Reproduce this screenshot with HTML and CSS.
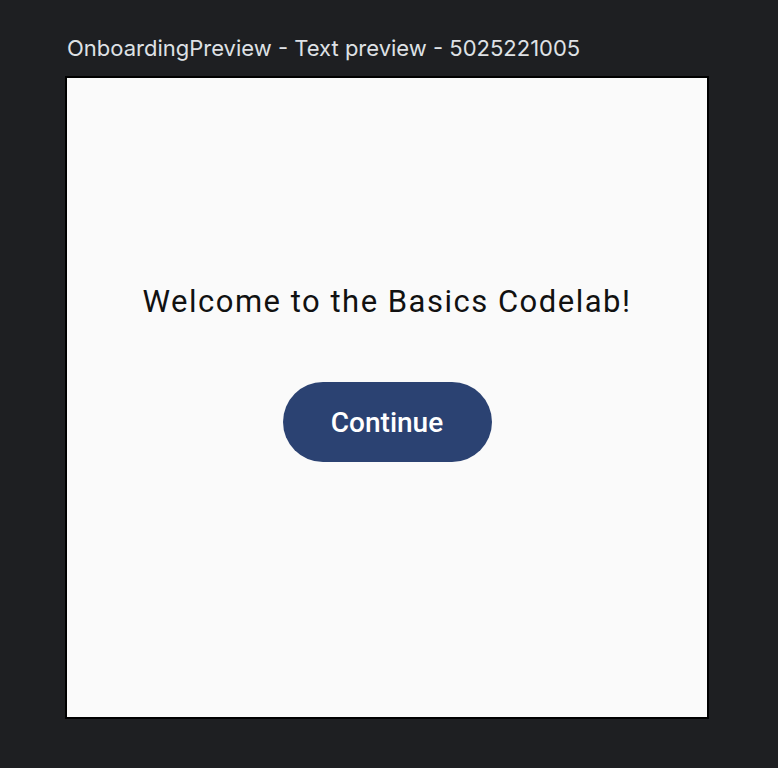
FILE: index.html
```html
<!DOCTYPE html>
<html lang="en">
<head>
  <meta charset="UTF-8" />
  <title>OnboardingPreview</title>
  <link rel="stylesheet" href="styles.css">
</head>
<body>
  <div class="preview">
    <div class="preview-title">OnboardingPreview - Text preview - 5025221005</div>
    <div class="frame">
      <div class="onboarding">
        <p class="welcome">Welcome to the Basics Codelab!</p>
        <button class="continue">Continue</button>
      </div>
    </div>
  </div>
</body>
</html>
```

FILE: styles.css
```css
* {
  box-sizing: border-box;
}
body {
  margin: 0;
  background: #1e1f22;
  min-height: 100vh;
  font-family: 'Inter', sans-serif;
}
.preview {
  padding: 34px 0 0 65px;
}
.preview-title {
  color: #dfe1e5;
  font-size: 22px;
  line-height: 28px;
  padding-left: 2px;
  margin-bottom: 14px;
}
.frame {
  width: 644px;
  height: 643px;
  border: 2px solid #000;
  background: #fafafa;
}
.onboarding {
  display: flex;
  flex-direction: column;
  align-items: center;
  padding-top: 204px;
}
.welcome {
  margin: 0;
  font-family: 'Roboto', sans-serif;
  font-size: 31px;
  line-height: 40px;
  color: #111;
  letter-spacing: 1.5px;
}
.continue {
  margin-top: 60px;
  width: 209px;
  height: 80px;
  border: none;
  border-radius: 40px;
  background: #2b4272;
  color: #fff;
  font-family: 'Roboto', sans-serif;
  font-weight: 500;
  font-size: 28px;
}
```
